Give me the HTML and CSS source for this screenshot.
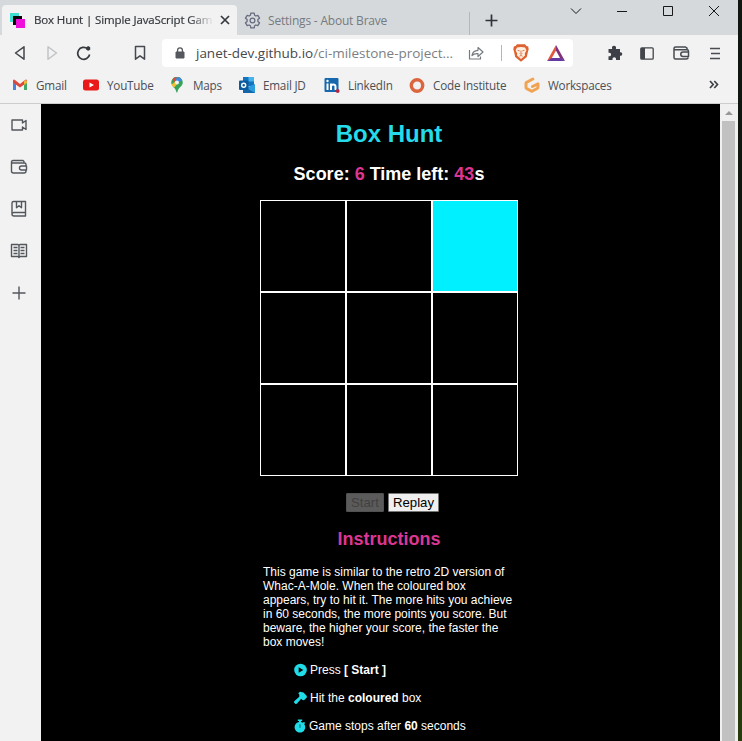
FILE: index.html
```html
<!DOCTYPE html>
<html lang="en">
<head>
<meta charset="utf-8">
<title>Box Hunt | Simple JavaScript Game</title>
<link rel="stylesheet" href="styles.css">
</head>
<body>
<div class="window">
  <header class="tabs">
    <div class="tab active">
      <svg class="favicon" width="16" height="16" viewBox="0 0 16 16"><path fill="#3fe0d3" d="M0 0h9v9H0z"/><path fill="#080808" d="M3 3h9v9H3z"/><path fill="#f010dc" d="M6 6h9v9H6z"/></svg>
      <span class="tab-title">Box Hunt | Simple JavaScript Gam</span>
      <svg class="close" width="10" height="10" viewBox="0 0 10 10"><path d="M1 1l8 8M9 1L1 9" stroke="#35383d" stroke-width="1.7"/></svg>
    </div>
    <div class="tab idle">
      <svg width="17" height="17" viewBox="0 0 17 17" fill="none" stroke="#686c7e" stroke-width="1.3" stroke-linejoin="round"><path d="M6.8 1.2h3.4l.4 2.1 1.2.7 2-.7 1.7 2.9-1.6 1.4v1.8l1.6 1.4-1.7 2.9-2-.7-1.2.7-.4 2.1H6.8l-.4-2.1-1.2-.7-2 .7-1.7-2.9 1.6-1.4V7.6L1.500 6.200l1.700-2.900 2 .7 1.200-.7z"/><circle cx="8.500" cy="8.500" r="2.400"/></svg>
      <span class="tab-title">Settings - About Brave</span>
    </div>
    <svg class="new-tab" width="13" height="13" viewBox="0 0 13 13"><path d="M6.500 .5v12M.5 6.500h12" stroke="#303337" stroke-width="1.700"/></svg>
    <div class="controls">
      <svg width="12" height="12" viewBox="0 0 12 12"><path d="M1 3.500l5 5 5-5"/></svg>
      <svg width="12" height="12" viewBox="0 0 12 12"><path d="M1 6.500h10"/></svg>
      <svg width="12" height="12" viewBox="0 0 12 12"><path d="M1.500 1.500h9v9h-9z"/></svg>
      <svg width="12" height="12" viewBox="0 0 12 12"><path d="M1 1l10 10M11 1L1 11"/></svg>
    </div>
  </header>

  <nav class="toolbar">
    <svg class="back" width="12" height="16" viewBox="0 0 12 16"><path d="M10 1.800v12.400L1.500 8z" fill="none" stroke="#43464b" stroke-width="1.500" stroke-linejoin="round"/></svg>
    <svg class="forward" width="12" height="16" viewBox="0 0 12 16"><path d="M2 1.800v12.400L10.500 8z" fill="none" stroke="#bfc1c3" stroke-width="1.400" stroke-linejoin="round"/></svg>
    <svg class="reload" width="16" height="16" viewBox="0 0 16 16"><path d="M13.600 9.500A6 6 0 1 1 11.500 3.700" fill="none" stroke="#36393e" stroke-width="1.700"/><path d="M10.200 2.200l2-1.200 2 1.200v2.600l-2 1-2-1z" fill="#36393e"/></svg>
    <svg class="mark" width="12" height="16" viewBox="0 0 12 16"><path d="M1.500 1.500h9v12.700L6 10.800l-4.500 3.400z" fill="none" stroke="#46494e" stroke-width="1.500" stroke-linejoin="round"/></svg>
    <div class="address">
      <svg class="lock" width="10" height="12" viewBox="0 0 10 12"><path d="M1 5h8v6H1z" fill="#55585e" stroke="#55585e" stroke-linejoin="round"/><path d="M2.600 5V3.300a2.400 2.400 0 0 1 4.800 0V5" fill="none" stroke="#55585e" stroke-width="1.300"/></svg>
      <span class="url">janet-dev.github.io<span class="path">/ci-milestone-project...</span></span>
      <svg class="share" width="16" height="14" viewBox="0 0 16 14" fill="none" stroke="#777b80" stroke-width="1.200" stroke-linejoin="round"><path d="M1.500 4v9h11v-2.500M4 9.500C4.500 6 6.500 4.500 10 4.300V1.500L15 6l-5 4.500V7.700C7.500 7.500 5.500 8 4 9.500z"/></svg>
      <i class="rule"></i>
      <svg class="lion" width="16" height="18" viewBox="0 0 16 18"><path fill="#dd6230" d="M4 .3h8L13.500 2l1.700.6.5 3-.7 2-1.200 5.500L8 17.700l-5.800-4.600L1 7.600l-.7-2 .5-3L2.500 2z"/><path fill="#fff0e2" d="M4 3.500l4-.6 4 .6 1.400 2.700-1.600 3.300.2 2L8 14.900l-4-3.400.2-2-1.600-3.300z"/><path fill="none" stroke="#d98056" stroke-width="1" d="M4.500 6.300l2.200.6M11.500 6.300l-2.200.6M8 6.500v3M6.600 9.500L8 10.300l1.400-.8M6.500 12.200L8 11.500l1.500.7"/></svg>
      <svg class="bat" width="18" height="16" viewBox="0 0 18 16"><path fill="#e4573a" d="M9 0L0 16l4.500-2.500L9 5.500z"/><path fill="#813079" d="M9 0l9 16-4.700-2.500L9 5.500z"/><path fill="#653aa0" d="M0 16l4.500-3h9L18 16z"/></svg>
    </div>
    <svg class="puzzle" width="16" height="16" viewBox="0 0 16 16"><path fill="#3c3f46" d="M1.500 4h3.700C4.500 2 5.500.8 7 .8S9.500 2 8.900 4H13v3.300c1.300-.5 2.200.4 2.200 1.700s-.9 2.200-2.200 1.700V15H9c.4-1.800-.5-2.700-1.700-2.700S5.100 13.300 5.500 15h-4v-3.800c1.800.4 2.600-.5 2.600-1.700S3.300 7.300 1.500 7.800z"/></svg>
    <svg class="panel" width="14" height="13" viewBox="0 0 14 13"><rect x=".8" y=".8" width="12.400" height="11.400" rx="1" fill="none" stroke="#42454a" stroke-width="1.300"/><path fill="#42454a" d="M1 1h4v11H1z"/></svg>
    <svg class="wallet" width="17" height="14" viewBox="0 0 17 14" fill="none" stroke="#484b50" stroke-width="1.500" stroke-linejoin="round"><path d="M14 3.800V2.200L12.500 1H2.500Q1 1 1 2.500v9Q1 13 2.500 13H13q2 0 2-1.500M1 3.800h13q1.500 0 1.500 1.500v1M10 6h5.500v4.500H10a2.250 2.250 0 0 1 0-4.500z"/></svg>
    <svg class="menu" width="10" height="13" viewBox="0 0 10 13"><path d="M0 1.500h10M1 6.500h9M0 11.500h10" stroke="#494c51" stroke-width="1.500"/></svg>
  </nav>

  <nav class="bookmarks">
    <a class="bookmark gmail"><svg width="16" height="16" viewBox="0 0 16 16"><path fill="#4b83d8" d="M1 4l3 2v7H1z"/><path fill="#46a76b" d="M12 6l3-2v9h-3z"/><path fill="#db493b" d="M1 3.500Q1.500 2 3 3l5 4 5-4q1.500-1 2 .5v2L8 10.500l-7-5z"/><path fill="#edb63e" d="M12 4l1.500-1Q15 3 15 4.500V6l-3 2z"/></svg>Gmail</a>
    <a class="bookmark youtube"><svg width="16" height="16" viewBox="0 0 16 16"><rect y="2.500" width="16" height="11" rx="2.500" fill="#e91919"/><path fill="#fff" d="M6.500 5.500v5L11 8z"/></svg>YouTube</a>
    <a class="bookmark maps"><svg width="16" height="16" viewBox="0 0 16 16"><path fill="#35a35a" d="M2.200 5.500a5.800 5.800 0 0 1 11.600 0C13.800 9.500 9 10 8.300 15.600h-.8C7 11 2.200 9 2.200 5.500z"/><path fill="#e24a3d" d="M3.300 2.500A5.700 5.700 0 0 1 8 0L6 5z"/><path fill="#4289e0" d="M8 0q3.500 0 5 2.700L8 7 6 5z"/><path fill="#f5bd35" d="M2.600 7.500L6.800 4l2 2.500L4.700 11z"/><circle cx="8" cy="5.500" r="2" fill="#f4f4f4"/></svg>Maps</a>
    <a class="bookmark email"><svg width="16" height="16" viewBox="0 0 16 16"><path fill="#1474bf" d="M4 0h11v9H4z"/><path fill="#43b5e9" d="M9.500 0H15v4.500H9.500z"/><path fill="#2b9ddd" d="M4 8.500l6 1 6-2.500v9H4z"/><path fill="#1565a8" d="M4 9l12 7H4z"/><rect y="3.500" width="9.500" height="9.500" rx="1" fill="#0d5b9f"/><circle cx="4.700" cy="8.200" r="2" fill="none" stroke="#fff" stroke-width="1.400"/></svg>Email JD</a>
    <a class="bookmark linkedin"><svg width="16" height="16" viewBox="0 0 16 16"><rect x=".5" y="1" width="14" height="14" rx="1" fill="#1667ac"/><path fill="none" stroke="#fff" stroke-width="2" d="M3.500 6.500V13M7 13V6.500M7 9.500q0-2 2.200-2t2.300 2V13"/><circle cx="3.500" cy="4" r="1.200" fill="#fff"/><circle cx="13.700" cy="14" r="1.900" fill="#ad2745"/></svg>LinkedIn</a>
    <a class="bookmark institute"><svg width="16" height="16" viewBox="0 0 16 16"><circle cx="8" cy="8.500" r="5.700" fill="none" stroke="#dd653d" stroke-width="3.400"/></svg>Code Institute</a>
    <a class="bookmark workspaces"><svg width="16" height="16" viewBox="0 0 16 16"><path fill="none" stroke="#f0a453" stroke-width="3" stroke-linejoin="round" stroke-linecap="round" d="M8.800 2L2.800 5.200Q2 5.600 2 6.500v4q0 .8.800 1.200L8 14.300l5.200-2.800q.8-.4.800-1.200V6.800L8.500 9.500"/></svg>Workspaces</a>
    <svg class="more" width="10" height="9" viewBox="0 0 10 9"><path d="M1 1l3.200 3.500L1 8M5.300 1l3.200 3.500L5.300 8" fill="none" stroke="#3d4045" stroke-width="1.700"/></svg>
  </nav>

  <div class="main">
    <aside class="sidebar">
      <svg viewBox="0 0 18 18"><path d="M2 4h10.500v3L16 4.500v9L12.500 11v3H2z"/></svg>
      <svg viewBox="0 0 18 18"><path d="M14 5V3.500L13 2.500H3Q1.500 2.500 1.500 4v9q0 2 2 2H14q2 0 2-2v-1M1.500 5h13q1.500 0 1.500 1.500V8M11.500 8h5v4h-5a2 2 0 0 1 0-4z"/></svg>
      <svg viewBox="0 0 18 18"><path d="M15.500 12.500v-11h-12q-1.500 0-1.500 1.500v11q0 2 2 2h11.500v-3.500H4q-2 0-2 1.500M6.500 1.500v6.200L9 5.800l2.500 1.900V1.500"/></svg>
      <svg viewBox="0 0 18 18"><path d="M1.500 2.500H8l1 1 1-1h6.500v12H10l-1 1-1-1H1.500zM9 3.500v12M3.500 5.500h4M3.500 8.500h4M3.500 11.500h4M10.500 5.500h4M10.500 8.500h4M10.500 11.500h4"/></svg>
      <svg viewBox="0 0 18 18"><path d="M9 2.500v13M2.500 9h13"/></svg>
    </aside>

    <main class="page">
      <h1>Box Hunt</h1>
      <h2 class="score">Score: <span>6</span> Time left: <span>43</span>s</h2>
      <div class="board">
        <div></div><div></div><div class="lit"></div>
        <div></div><div></div><div></div>
        <div></div><div></div><div></div>
      </div>
      <div class="buttons"><button class="start" disabled>Start</button><button class="replay">Replay</button></div>
      <h2 class="heading">Instructions</h2>
      <p class="intro">This game is similar to the retro 2D version of Whac-A-Mole. When the coloured box appears, try to hit it. The more hits you achieve in 60 seconds, the more points you score. But beware, the higher your score, the faster the box moves!</p>
      <ul class="steps">
        <li><svg width="13" height="14" viewBox="0 0 13 14"><circle cx="6.500" cy="7" r="6.300" fill="#20dce9"/><path d="M4.700 4.300v5.400L9.300 7z" fill="#000"/></svg><span>Press <b>[ Start ]</b></span></li>
        <li><svg width="13" height="14" viewBox="0 0 13 14"><path fill="#20dce9" d="M4.200 2.200L6 .8l3.500.8L12.800 5v1.500L10 9.300l-1.500-.2-1.300-1.300-4.400 4.900-1.300.2L0 11.600l.2-1.400L5.300 5.700V3.600z"/></svg><span>Hit the <b>coloured</b> box</span></li>
        <li class="timer"><svg width="12" height="14" viewBox="0 0 12 14"><path fill="#20dce9" d="M3.800.5h4.400V2H7v1l2 .7 1-.9 1.100 1.100-.9 1.200A5.300 5.300 0 1 1 5 3V2H3.800z"/><path d="M6 5.200v3.500" stroke="#087984" stroke-width="1.200"/></svg><span>Game stops after <b>60</b> seconds</span></li>
      </ul>
    </main>

    <div class="scrollbar"><i class="arrow"></i><i class="thumb"></i></div>
  </div>
</div>
</body>
</html>
```
FILE: styles.css
```css
* { box-sizing: border-box; }
body {
  margin: 0;
  height: 741px;
  overflow: hidden;
  background: linear-gradient(#101510, #101b0d 60%, #263d0d);
}
svg { display: block; flex: none; }
.window {
  width: 738px;
  height: 741px;
  display: flex;
  flex-direction: column;
  background: #f2f2f2;
  font: 12px "Open Sans", sans-serif;
  color: #4c4f55;
}

.tabs { height: 35px; flex: none; background: #d5d9dc; display: flex; align-items: flex-end; }
.tab { display: flex; align-items: center; height: 30px; padding-bottom: 1px; white-space: nowrap; }
.active { width: 235px; margin-left: 2px; padding-left: 8px; border-radius: 4px 4px 0 0; background: #f2f2f2; }
.active .tab-title {
  width: 180px;
  margin-left: 8px;
  font-size: 11.5px;
  letter-spacing: -0.12px;
  color: #35383d;
  -webkit-text-stroke: 0.2px #35383d;
  mask-image: linear-gradient(90deg, #000 155px, transparent);
}
.favicon { margin-top: 2px; }
.close { margin-left: 6px; }
.idle { width: 233px; padding-left: 7px; color: #777a7e; }
.idle .tab-title { margin-left: 7px; letter-spacing: -0.2px; }
.new-tab { margin: 0 0 8px 0; box-sizing: content-box; padding-left: 15px; }
.tabs .idle { border-right: 1px solid #b4b8bb; height: 23px; margin-bottom: 0; padding-bottom: 0; align-items: flex-start; }
.tabs .idle svg { margin-top: 0; }
.controls { display: flex; gap: 34px; margin: 0 0 18px 72px; fill: none; stroke: #17191b; stroke-width: 1; }

.toolbar { height: 36px; flex: none; display: flex; align-items: center; }
.back { margin-left: 14px; }
.forward { margin-left: 20px; }
.reload { margin-left: 18px; }
.mark { margin-left: 42px; }
.address {
  width: 411px;
  height: 28px;
  margin-left: 16px;
  padding-left: 13px;
  display: flex;
  align-items: center;
  background: #fff;
  border-radius: 4px;
}
.url { width: 266px; margin-left: 11px; font-size: 13.5px; letter-spacing: -0.02px; white-space: nowrap; color: #45484c; }
.path { color: #7c7f83; }
.share { margin-left: 6px; }
.rule { width: 1px; height: 16px; margin-left: 17px; background: #b6b6b6; }
.lion { margin-left: 11px; }
.bat { margin-left: 18px; }
.puzzle { margin-left: 34px; }
.panel { margin-left: 17px; }
.wallet { margin-left: 19px; }
.menu { margin-left: 20px; }

.bookmarks { height: 33px; flex: none; display: flex; align-items: center; padding: 0 0 5px 12px; border-bottom: 1px solid #cdcdcd; }
.bookmark { flex: none; display: flex; align-items: center; gap: 8px; font-size: 11.7px; letter-spacing: -0.22px; white-space: nowrap; }
.gmail { width: 71px; }
.youtube { width: 86px; }
.maps { width: 70px; }
.email, .linkedin { width: 85px; }
.institute { width: 115px; }
.workspaces { width: 185px; }

.main { flex: 1; min-height: 0; display: flex; }
.sidebar { width: 41px; flex: none; display: flex; flex-direction: column; align-items: center; gap: 24px; padding: 12px 3px 0 0; }
.sidebar svg { width: 18px; height: 18px; fill: none; stroke: #53575c; stroke-width: 1.4; stroke-linejoin: round; }

.page {
  width: 679px;
  flex: none;
  padding: 16px 0 0 17px;
  overflow: hidden;
  display: flex;
  flex-direction: column;
  align-items: center;
  background: #000;
  color: #fff;
  font: 12px "Liberation Sans", Arial, sans-serif;
}
h1, h2, p, ul { margin: 0; padding: 0; }
h1 { font-size: 24px; line-height: 28px; color: #25dbea; }
.score { margin-top: 16px; font-size: 18px; line-height: 21px; }
.score span { color: #dc3693; }
.board { margin-top: 15px; display: grid; grid-template: repeat(3, 92px) / repeat(3, 86px); }
.board div { border: 1px solid #fff; }
.board .lit { background: #00f0ff; }
.buttons { display: flex; gap: 4px; margin: 17px 0 0 7px; }
button { height: 19px; padding: 0; border: 1px solid #767676; border-radius: 1px; font: 13.2px/16px "Liberation Sans", Arial, sans-serif; }
.start { width: 38px; background: #5b5b5b; border-color: #515151; color: #414141; }
.replay { width: 51px; background: #efefef; color: #000; }
.heading { margin-top: 17px; font-size: 18px; line-height: 21px; color: #dc3693; }
.intro { width: 252px; margin-top: 15px; line-height: 14px; }
.steps { width: 252px; margin-top: 14px; padding-left: 31px; list-style: none; display: grid; gap: 14px; }
.steps li { display: flex; gap: 3px; height: 14px; line-height: 14px; white-space: nowrap; }

.scrollbar { width: 18px; flex: none; display: flex; flex-direction: column; padding: 7px 3px 0 2px; background: #f0f0f0; }
.arrow { margin-left: 3px; width: 0; border: 4px solid transparent; border-top: 0; border-bottom: 4px solid #989898; }
.thumb { flex: 1; margin-top: 6px; background: #c1c1c1; }
```
